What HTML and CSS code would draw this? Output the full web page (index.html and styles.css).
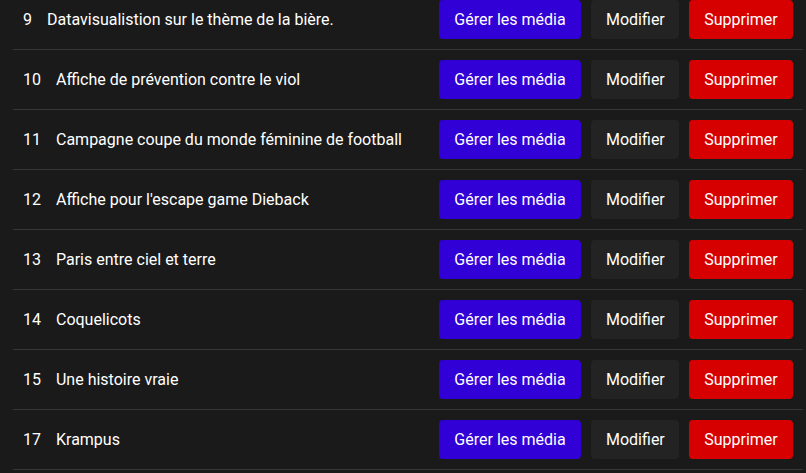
FILE: index.html
```html
<!DOCTYPE html>
<html lang="fr">
<head>
<meta charset="utf-8">
<title>Projets</title>
<link rel="stylesheet" href="styles.css">
</head>
<body>
<div class="list">
  <div class="row"><span class="num">9</span><span class="title">Datavisualistion sur le thème de la bière.</span><div class="actions"><button class="btn media">Gérer les média</button><button class="btn edit">Modifier</button><button class="btn del">Supprimer</button></div></div>
  <div class="row"><span class="num">10</span><span class="title">Affiche de prévention contre le viol</span><div class="actions"><button class="btn media">Gérer les média</button><button class="btn edit">Modifier</button><button class="btn del">Supprimer</button></div></div>
  <div class="row"><span class="num">11</span><span class="title">Campagne coupe du monde féminine de football</span><div class="actions"><button class="btn media">Gérer les média</button><button class="btn edit">Modifier</button><button class="btn del">Supprimer</button></div></div>
  <div class="row"><span class="num">12</span><span class="title">Affiche pour l'escape game Dieback</span><div class="actions"><button class="btn media">Gérer les média</button><button class="btn edit">Modifier</button><button class="btn del">Supprimer</button></div></div>
  <div class="row"><span class="num">13</span><span class="title">Paris entre ciel et terre</span><div class="actions"><button class="btn media">Gérer les média</button><button class="btn edit">Modifier</button><button class="btn del">Supprimer</button></div></div>
  <div class="row"><span class="num">14</span><span class="title">Coquelicots</span><div class="actions"><button class="btn media">Gérer les média</button><button class="btn edit">Modifier</button><button class="btn del">Supprimer</button></div></div>
  <div class="row"><span class="num">15</span><span class="title">Une histoire vraie</span><div class="actions"><button class="btn media">Gérer les média</button><button class="btn edit">Modifier</button><button class="btn del">Supprimer</button></div></div>
  <div class="row"><span class="num">17</span><span class="title">Krampus</span><div class="actions"><button class="btn media">Gérer les média</button><button class="btn edit">Modifier</button><button class="btn del">Supprimer</button></div></div>
</div>
</body>
</html>
```
FILE: styles.css
```css
html, body {
  margin: 0;
  padding: 0;
  background: #1a1a1a;
  color: #ffffff;
  font-family: Roboto, "Liberation Sans", Arial, sans-serif;
  font-size: 16px;
  overflow: hidden;
}
.list {
  margin: -10px 3px 0 13px;
}
.row {
  display: flex;
  align-items: center;
  height: 59px;
  border-bottom: 1px solid #363636;
  padding-left: 10px;
}
.num {
  margin-right: 15px;
}
.title {
  flex: 1;
}
.actions {
  display: flex;
  gap: 10px;
  padding-right: 10px;
}
.btn {
  height: 39px;
  border: none;
  border-radius: 4px;
  color: #ffffff;
  font-family: inherit;
  font-size: 16px;
  padding: 0 15px;
  cursor: pointer;
}
.media { background: #3000d7; width: 142px; }
.edit { background: #232323; width: 88px; }
.del { background: #d60000; width: 104px; }
```
